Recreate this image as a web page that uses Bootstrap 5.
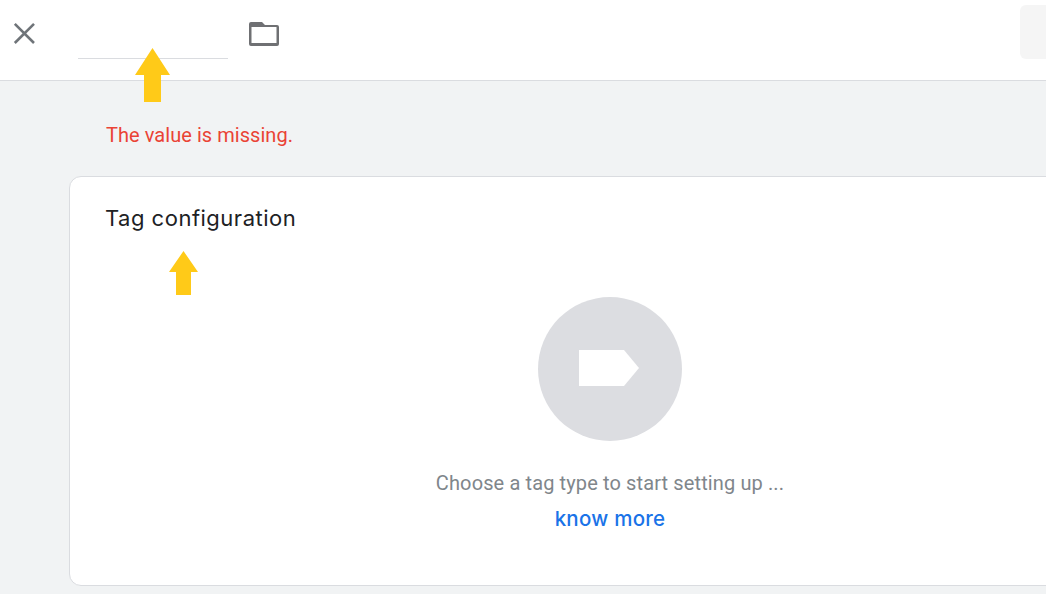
<!DOCTYPE html>
<html lang="en">
<head>
<meta charset="utf-8">
<title>Tag configuration</title>
<link href="https://cdn.jsdelivr.net/npm/bootstrap@5.3.0/dist/css/bootstrap.min.css" rel="stylesheet">
<style>
html,body{height:100%;overflow:hidden}
body{background:#f1f3f4;font-family:Roboto,"Liberation Sans",sans-serif;position:relative}
.top-bar{height:81px;background:#fff;border-bottom:1px solid #dadce0;padding-left:12px}
.close-btn{width:24px;height:24px;padding:0;border:0;background:none;line-height:0;margin-top:21px}
.name-field{width:150px;height:1px;background:#dadce0;margin-left:42px;margin-top:58px}
.folder-btn{width:30px;height:24px;margin-left:21px;margin-top:22px;line-height:0}
.action-stub{width:26px;height:54px;margin-top:5px;background:#f5f5f5;border-radius:6px 0 0 6px}
.err-text{color:#ea4335;font-size:20px;line-height:24px;margin:42px 0 0 106px;letter-spacing:.05px}
.config-panel{margin:29px -105px 0 69px;height:410px;background:#fff;border:1.5px solid #dadce0;border-radius:12px;padding:24px 35px 0}
.panel-title{font-family:Inter,sans-serif;font-size:22px;font-weight:400;letter-spacing:.5px;line-height:34px;color:#202124;margin:0}
.empty-state{margin-top:62px}
.tag-disc{width:144px;height:144px;border-radius:50%;background:#dcdde1}
.tag-shape{margin-bottom:2px}
.hint{color:#80868b;font-size:20px;line-height:24px;margin:30px 0 0;letter-spacing:.12px}
.more-link{color:#1a73e8;font-family:Inter,sans-serif;font-size:20.5px;font-weight:500;letter-spacing:.25px;line-height:24px;margin-top:12px;text-decoration:none}
.mark-arrow{position:absolute;line-height:0}
</style>
</head>
<body>
<header class="top-bar d-flex align-items-start">
  <button class="close-btn" type="button" aria-label="Close">
    <svg width="24" height="24" viewBox="0 0 24 24"><path d="M2.800 2.800L22 22M22 2.800L2.800 22" stroke="#6f7479" stroke-width="2.600" fill="none"/></svg>
  </button>
  <div class="name-field"></div>
  <div class="folder-btn">
    <svg width="30" height="24" viewBox="0 0 30 24"><path d="M2 0h11l3 3h12a2 2 0 0 1 2 2v17a2 2 0 0 1-2 2H2a2 2 0 0 1-2-2V2a2 2 0 0 1 2-2z" fill="#6f7073"/><rect x="2.500" y="5" width="25" height="16" fill="#fff"/></svg>
  </div>
  <div class="action-stub ms-auto"></div>
</header>
<p class="err-text">The value is missing.</p>
<section class="config-panel">
  <h2 class="panel-title">Tag configuration</h2>
  <div class="empty-state d-flex flex-column align-items-center">
    <div class="tag-disc d-flex align-items-center justify-content-center">
      <svg class="tag-shape" width="62" height="36" viewBox="0 0 62 36"><path d="M0 0H45L60 18L45 36H0Z" fill="#fff"/></svg>
    </div>
    <p class="hint">Choose a tag type to start setting up ...</p>
    <a class="more-link" href="#">know more</a>
  </div>
</section>
<div class="mark-arrow" style="left:135px;top:48px"><svg width="35" height="54" viewBox="0 0 35 54"><path d="M17.500 0L35 27H26V54H9V27H0Z" fill="#ffca18"/></svg></div>
<div class="mark-arrow" style="left:169px;top:251px"><svg width="29" height="44" viewBox="0 0 29 44"><path d="M14.500 0L29 21H22V44H7V21H0Z" fill="#ffca18"/></svg></div>
<script src="https://cdn.jsdelivr.net/npm/bootstrap@5.3.0/dist/js/bootstrap.bundle.min.js"></script>
</body>
</html>
